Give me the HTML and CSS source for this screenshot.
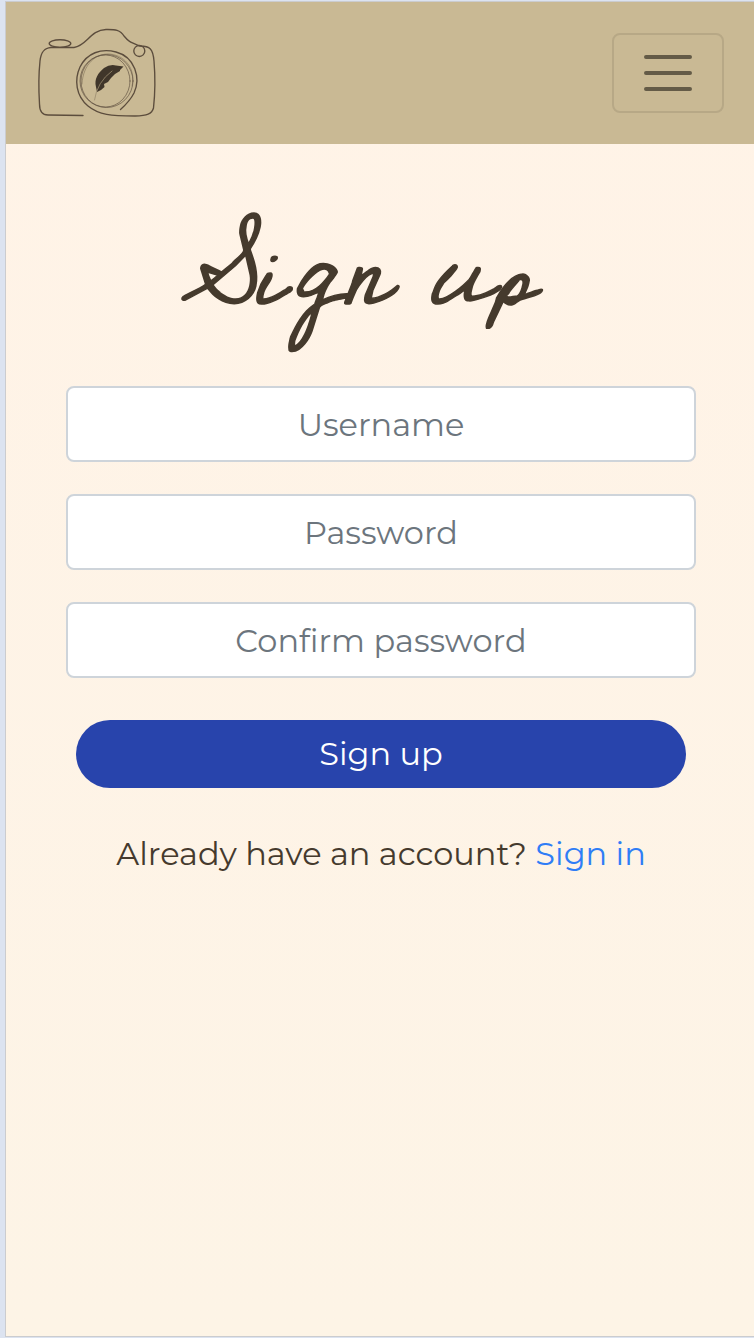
FILE: index.html
```html
<!DOCTYPE html>
<html lang="en">
<head>
<meta charset="utf-8">
<title>Sign up</title>
<link rel="stylesheet" href="styles.css">
</head>
<body>
<div class="page">
  <header class="navbar">
    <a class="brand" href="#" aria-label="Home">
      <svg class="logo" viewBox="36 26 122 94" fill="none" stroke="#5c4d3d" stroke-width="1.35" stroke-linecap="round">
        <path d="M83 115.500L48 115C42 115 39.500 110 39.500 104Q38 80 40 61C41 52 44 48 51 47.500L74 47.500C87 46 90 30 106 29.500C114 29.500 120 29 124 36C129 42 130 42 140 46C150 46 153 49 154 61Q156 85 153.500 108C152 114 147 115.500 135 116C111 116 99 115 88 106C76 96 74 80 80 67C87 53 101 48 116 52C135 57 141 78 134 93Q130 101 120.500 109.500"/>
        <ellipse cx="60" cy="43.500" rx="10.800" ry="3.800"/>
        <circle cx="139.300" cy="51" r="5.500"/>
        <circle cx="106.500" cy="81" r="26.500" stroke-width="1" opacity=".65"/>
        <ellipse cx="105.500" cy="81" rx="24.500" ry="26" stroke-width="1" opacity=".65"/>
        <path d="M82 84C83 64 96 53 110 54C127 56 136 71 132 86" stroke-width=".8" opacity=".5"/>
        <path d="M96 87C94 79 98 73 104 68Q110 64 116 65.500L123.500 66.500L120 70L120 71L115 74L111 78L108 82L104 84L104.500 87L101 90L97 92Z" fill="#40362a" stroke="none"/>
        <path d="M112 71Q97 82 94.500 100" stroke="#9a8b6f" stroke-width=".8"/>
      </svg>
    </a>
    <button class="toggler" type="button" aria-label="Toggle navigation">
      <svg class="bars" viewBox="0 0 60 60" stroke="#645b47" stroke-width="4" stroke-linecap="round">
        <path d="M8 14H52M8 30H52M8 46H52"/>
      </svg>
    </button>
  </header>
  <main class="content">
    <h1 class="title">Sign up</h1>
    <form class="form">
      <input class="field username" type="text" placeholder="Username">
      <input class="field password" type="password" placeholder="Password">
      <input class="field confirm" type="password" placeholder="Confirm password">
      <button class="submit" type="button">Sign up</button>
    </form>
    <p class="account">Already have an account? <a class="link" href="#">Sign in</a></p>
  </main>
</div>
</body>
</html>
```
FILE: styles.css
```css
* { box-sizing: border-box; }
body {
  margin: 0;
  height: 1338px;
  padding: 1px 0 1px 5px;
  background: #dce3f0;
  font-family: Montserrat, Inter, sans-serif;
  font-weight: 400;
  overflow: hidden;
}
.page {
  height: 1336px;
  border: 1px solid #cbcccf;
  border-right: 0;
  background: linear-gradient(#fff3e7, #fdf4e6);
}
.navbar {
  display: flex;
  align-items: center;
  justify-content: space-between;
  height: 142px;
  padding: 0 30px;
  background: #c9b994;
}
.brand, .logo { display: block; width: 122px; height: 94px; }
.toggler {
  display: flex;
  align-items: center;
  justify-content: center;
  width: 112px;
  height: 80px;
  padding: 0;
  border: 2px solid #b7a886;
  border-radius: 8px;
  background: none;
}
.bars { width: 60px; height: 60px; }
.content { padding: 42px 58px 0 60px; }
.title {
  margin: 0;
  height: 200px;
  padding-right: 37px;
  font: 400 97px/178px "Homemade Apple", "Cedarville Cursive", cursive;
  word-spacing: -6px;
  text-align: center;
  white-space: nowrap;
  color: #453a2d;
  -webkit-text-stroke: 1.5px #453a2d;
  transform: skewX(-12deg) scaleX(1.06);
}
.form { display: flex; flex-direction: column; gap: 32px; }
.field {
  width: 100%;
  height: 76px;
  padding: 0 24px;
  border: 2px solid #ced4da;
  border-radius: 8px;
  background: #fff;
  font: inherit;
  font-size: 32px;
  text-align: center;
}
.field::placeholder { color: #6c757d; opacity: 1; }
.submit {
  height: 68px;
  margin: 10px 10px 0;
  padding: 0 0 2px;
  border: 0;
  border-radius: 34px;
  background: #2844ac;
  color: #fff;
  font: inherit;
  font-size: 32px;
}
.account {
  margin: 42px 0 0;
  font-size: 32px;
  line-height: 48px;
  text-align: center;
  white-space: nowrap;
  color: #453a2d;
}
.link { color: #2f7df6; text-decoration: none; }
```
